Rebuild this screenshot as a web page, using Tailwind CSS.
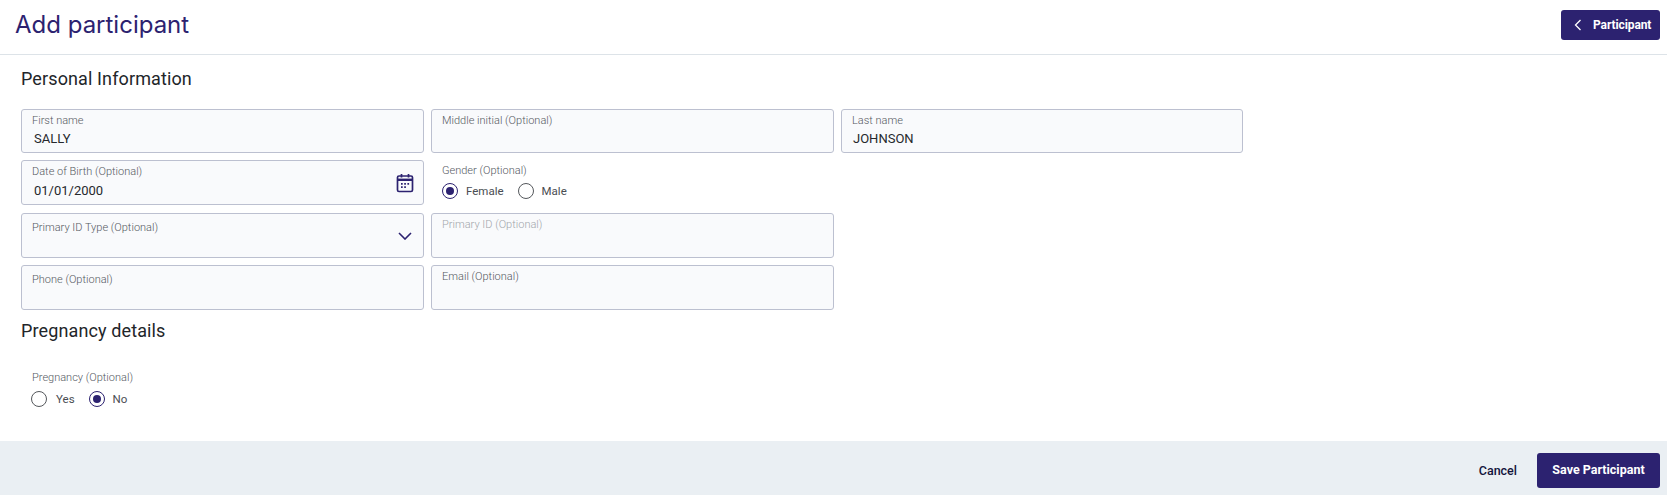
<!DOCTYPE html>
<html lang="en">
<head>
    <meta charset="UTF-8">
    <title>Add participant</title>
    <script src="https://cdn.jsdelivr.net/npm/@tailwindcss/browser@4"></script>
</head>
<body class="bg-white font-['Roboto',sans-serif] h-[495px] w-[1667px] overflow-hidden flex flex-col">
    <!-- Header -->
    <header class="h-[55px] shrink-0 border-b border-[#dde3e8] flex items-start justify-between pl-[15px] pr-[7px]">
        <h1 class="font-['Inter',sans-serif] font-normal text-[24px] leading-[32px] mt-[9px] text-[#2c2270]">Add participant</h1>
        <button class="mt-[10px] w-[99px] h-[30px] rounded-[3px] bg-[#2c2270] text-white text-[12px] font-bold tracking-[-0.1px] flex items-center pl-[13px]">
            <svg class="w-[8px] h-[12px] mr-[11px]" viewBox="0 0 8 12" fill="none" stroke="currentColor" stroke-width="1.3"><path d="M6.5 1L1.5 6l5 5"/></svg>
            Participant
        </button>
    </header>

    <main class="flex-1 pl-[21px]">
        <h2 class="text-[18px] leading-[24px] mt-[12px] text-[#222529] tracking-[0.12px]">Personal Information</h2>

        <div class="grid grid-cols-[403px_403px_402px] gap-x-[7px] mt-[18px]">
            <!-- Row 1 -->
            <div class="h-[44px] mb-[7px] rounded-[3px] border border-[#bcc0d0] bg-[#f9fafc] pl-[10px] pt-[4px]">
                <div class="text-[11px] font-light leading-[14px] text-[#55595f]">First name</div>
                <div class="text-[13px] leading-[18px] mt-[2px] pl-[2px] text-[#26292c]">SALLY</div>
            </div>
            <div class="h-[44px] mb-[7px] rounded-[3px] border border-[#bcc0d0] bg-[#f9fafc] pl-[10px] pt-[4px]">
                <div class="text-[11px] font-light leading-[14px] text-[#55595f]">Middle initial (Optional)</div>
            </div>
            <div class="h-[44px] mb-[7px] rounded-[3px] border border-[#bcc0d0] bg-[#f9fafc] pl-[10px] pt-[4px]">
                <div class="text-[11px] font-light leading-[14px] text-[#55595f]">Last name</div>
                <div class="text-[13px] leading-[18px] mt-[2px] pl-[1px] text-[#26292c]">JOHNSON</div>
            </div>

            <!-- Row 2 -->
            <div class="h-[45px] mb-[8px] rounded-[3px] border border-[#bcc0d0] bg-[#f9fafc] pl-[10px] pr-[9px] pt-[4px] flex justify-between">
                <div>
                    <div class="text-[11px] font-light leading-[14px] text-[#55595f]">Date of Birth (Optional)</div>
                    <div class="text-[13px] leading-[18px] mt-[3px] pl-[2px] text-[#26292c]">01/01/2000</div>
                </div>
                <svg class="w-[18px] h-[20px] mt-[8px]" viewBox="0 0 18 20" fill="none" stroke="#2c2270" stroke-width="1.7">
                    <rect x="1.5" y="3" width="15" height="15.5" rx="1.5"/>
                    <path d="M1.5 6.8h15" stroke-width="2.4"/>
                    <path d="M5.5 1v3.5M12.5 1v3.5"/>
                    <path d="M5 10.8h1.7M8.2 10.8h1.7M11.4 10.8h1.7M5 14.2h1.7M8.2 14.2h1.7" stroke-width="1.7"/>
                </svg>
            </div>
            <div class="h-[45px] mb-[8px] pl-[11px] pt-[4px]">
                <div class="text-[11px] font-light leading-[14px] text-[#55595f]">Gender (Optional)</div>
                <div class="flex items-center mt-[5px] text-[11.5px] leading-[16px] text-[#4a4d52]">
                    <span class="w-[16px] h-[16px] rounded-full border-[1.5px] border-[#2c2270] flex items-center justify-center"><span class="w-[8px] h-[8px] rounded-full bg-[#2c2270]"></span></span>
                    <span class="ml-[8px]">Female</span>
                    <span class="w-[16px] h-[16px] rounded-full border-[1.5px] border-[#55585c] ml-[14px]"></span>
                    <span class="ml-[8px]">Male</span>
                </div>
            </div>
            <div></div>

            <!-- Row 3 -->
            <div class="h-[45px] mb-[7px] rounded-[3px] border border-[#bcc0d0] bg-[#f9fafc] pl-[10px] pr-[11px] pt-[7px] flex justify-between">
                <div class="text-[11px] font-light leading-[14px] text-[#55595f]">Primary ID Type (Optional)</div>
                <svg class="w-[14px] h-[8px] mt-[11px]" viewBox="0 0 14 8" fill="none" stroke="#2c2270" stroke-width="1.6"><path d="M1 1l6 6 6-6"/></svg>
            </div>
            <div class="h-[45px] mb-[7px] rounded-[3px] border border-[#bcc0d0] bg-[#f9fafc] pl-[10px] pt-[4px]">
                <div class="text-[11px] font-light leading-[14px] text-[#a2a6ab]">Primary ID (Optional)</div>
            </div>
            <div></div>

            <!-- Row 4 -->
            <div class="h-[45px] rounded-[3px] border border-[#bcc0d0] bg-[#f9fafc] pl-[10px] pt-[7px]">
                <div class="text-[11px] font-light leading-[14px] text-[#55595f]">Phone (Optional)</div>
            </div>
            <div class="h-[45px] rounded-[3px] border border-[#bcc0d0] bg-[#f9fafc] pl-[10px] pt-[4px]">
                <div class="text-[11px] font-light leading-[14px] text-[#55595f]">Email (Optional)</div>
            </div>
            <div></div>
        </div>

        <h2 class="text-[18px] leading-[24px] mt-[9px] text-[#222529] tracking-[0.12px]">Pregnancy details</h2>
        <div class="pl-[11px] mt-[28px]">
            <div class="text-[11px] font-light leading-[14px] text-[#55595f]">Pregnancy (Optional)</div>
            <div class="flex items-center mt-[6px] text-[11.5px] leading-[16px] text-[#4a4d52]">
                <span class="w-[16px] h-[16px] -ml-[1px] rounded-full border-[1.5px] border-[#55585c]"></span>
                <span class="ml-[9px]">Yes</span>
                <span class="w-[16px] h-[16px] rounded-full border-[1.5px] border-[#2c2270] ml-[14px] flex items-center justify-center"><span class="w-[8px] h-[8px] rounded-full bg-[#2c2270]"></span></span>
                <span class="ml-[8px]">No</span>
            </div>
        </div>
    </main>

    <!-- Footer -->
    <footer class="h-[54px] shrink-0 bg-[#eaeff3] flex items-start justify-end pr-[7px] pt-[12px]">
        <button class="text-[12.5px] font-medium leading-[35px] text-[#14143c] mr-[20px]">Cancel</button>
        <button class="w-[123px] h-[35px] rounded-[3px] bg-[#2c2270] text-white text-[12.5px] font-bold">Save Participant</button>
    </footer>
</body>
</html>
